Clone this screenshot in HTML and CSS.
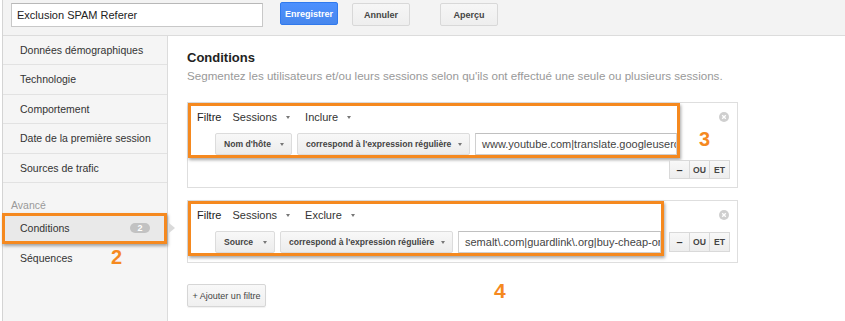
FILE: index.html
```html
<!DOCTYPE html>
<html lang="fr">
<head>
    <meta charset="UTF-8">
    <meta name="viewport" content="width=device-width, initial-scale=1.0">
    <title>Exclusion SPAM Referer</title>
    <link rel="stylesheet" href="styles.css">
</head>
<body>
<div class="page">
    <header class="topbar">
        <input class="segment-name" type="text" value="Exclusion SPAM Referer">
        <button class="btn btn-primary">Enregistrer</button>
        <button class="btn btn-cancel">Annuler</button>
        <button class="btn btn-preview">Aperçu</button>
    </header>

    <div class="layout">
        <nav class="sidebar">
            <ul class="nav-list">
                <li>Données démographiques</li>
                <li>Technologie</li>
                <li>Comportement</li>
                <li>Date de la première session</li>
                <li>Sources de trafic</li>
            </ul>
            <div class="nav-label">Avancé</div>
            <ul class="nav-list nav-advanced">
                <li class="active">Conditions <span class="count">2</span></li>
                <li>Séquences</li>
            </ul>
            <span class="callout callout-side">2</span>
        </nav>

        <main class="content">
            <h1>Conditions</h1>
            <p class="hint">Segmentez les utilisateurs et/ou leurs sessions selon qu'ils ont effectué une seule ou plusieurs sessions.</p>

            <!-- filtre 1 -->
            <div class="filter">
                <div class="filter-body">
                    <div class="annot annot-include">
                        <div class="filter-head">
                            <span class="filter-title">Filtre</span>
                            <span class="dropdown">Sessions <i class="caret"></i></span>
                            <span class="dropdown">Inclure <i class="caret"></i></span>
                        </div>
                        <div class="filter-row">
                            <span class="select-btn w-host">Nom d'hôte <i class="caret"></i></span>
                            <span class="select-btn w-match">correspond à l'expression régulière <i class="caret"></i></span>
                            <span class="value">www.youtube.com|translate.googleusercontent.com</span>
                        </div>
                    </div>
                    <span class="callout callout-3">3</span>
                </div>
                <div class="filter-foot">
                    <div class="logic"><span class="minus">–</span><span>OU</span><span>ET</span></div>
                </div>
                <svg class="remove" width="10" height="10" viewBox="0 0 10 10">
                    <circle cx="5" cy="5" r="5" fill="#cfcfcf"/>
                    <path d="M3.2 3.2 L6.8 6.8 M6.8 3.2 L3.2 6.8" stroke="#fff" stroke-width="1.3"/>
                </svg>
            </div>

            <!-- filtre 2 -->
            <div class="filter filter-second">
                <div class="filter-body">
                    <div class="annot annot-exclude">
                        <div class="filter-head">
                            <span class="filter-title">Filtre</span>
                            <span class="dropdown">Sessions <i class="caret"></i></span>
                            <span class="dropdown">Exclure <i class="caret"></i></span>
                        </div>
                        <div class="filter-row">
                            <span class="select-btn w-source">Source <i class="caret"></i></span>
                            <span class="select-btn w-match">correspond à l'expression régulière <i class="caret"></i></span>
                            <span class="value">semalt\.com|guardlink\.org|buy-cheap-online\.info</span>
                        </div>
                    </div>
                    <div class="logic logic-inline"><span class="minus">–</span><span>OU</span><span>ET</span></div>
                </div>
                <svg class="remove" width="10" height="10" viewBox="0 0 10 10">
                    <circle cx="5" cy="5" r="5" fill="#cfcfcf"/>
                    <path d="M3.2 3.2 L6.8 6.8 M6.8 3.2 L3.2 6.8" stroke="#fff" stroke-width="1.3"/>
                </svg>
            </div>

            <div class="add-row">
                <button class="add-btn">+ Ajouter un filtre</button>
                <span class="callout callout-4">4</span>
            </div>
        </main>
    </div>
</div>
</body>
</html>
```

FILE: styles.css
```css
body {
    margin: 0;
    font-family: "Liberation Sans", Arial, sans-serif;
    color: #333;
    background-color: #fff;
}
.page {
    margin-left: 2px;
    border-left: 1px solid #d4d4d4;
    min-height: 321px;
    display: flex;
    flex-direction: column;
}

/* barre du haut */
.topbar {
    height: 36px;
    box-sizing: border-box;
    display: flex;
    align-items: flex-start;
    padding: 2px 0 0 8px;
    background-color: #f3f3f3;
    border-bottom: 1px solid #dcdcdc;
}
.segment-name {
    width: 252px;
    height: 24px;
    margin: 1px 0 0;
    box-sizing: border-box;
    border: 1px solid #c8c8c8;
    border-top-color: #b8b8b8;
    padding: 0 5px;
    font-family: "Liberation Sans", Arial, sans-serif;
    font-size: 11px;
    color: #222;
    background-color: #fff;
}
.btn {
    width: 58px;
    height: 23px;
    padding: 0;
    font-family: "Liberation Sans", Arial, sans-serif;
    font-size: 9px;
    font-weight: bold;
    color: #444;
    background: linear-gradient(#f6f6f6, #eeeeee);
    border: 1px solid #d8d8d8;
    border-radius: 2px;
}
.btn-primary {
    margin-left: 17px;
    color: #fff;
    background: linear-gradient(#4d90fe, #4787ed);
    border-color: #3079ed;
}
.btn-cancel {
    margin: 1px 0 0 14px;
}
.btn-preview {
    margin: 1px 0 0 30px;
}

.layout {
    display: flex;
    flex: 1;
}

/* menu de gauche */
.sidebar {
    width: 164px;
    flex-shrink: 0;
    position: relative;
    background-color: #f5f5f5;
    border-right: 1px solid #dcdcdc;
}
.nav-list {
    list-style: none;
    margin: 0;
    padding: 0;
}
.nav-list li {
    height: 28.4px;
    line-height: 28.4px;
    padding-left: 17px;
    font-size: 10.5px;
    color: #333;
    border-bottom: 1px solid #e2e2e2;
}
.nav-label {
    margin-top: 16px;
    padding-left: 8px;
    font-size: 10.5px;
    line-height: 12px;
    color: #999;
}
.nav-advanced li {
    border-bottom: none;
    height: 28px;
    line-height: 28px;
}
.nav-advanced .active {
    position: relative;
    display: flex;
    align-items: center;
    justify-content: space-between;
    height: 25px;
    line-height: 25px;
    margin: 2px 0 0 -1px;
    padding: 0 14px 0 15px;
    background-color: #e9e9e9;
    border: 3px solid #f5891f;
    box-shadow: 1px 2px 3px rgba(0, 0, 0, 0.35);
}
.nav-advanced .active::after {
    content: "";
    position: absolute;
    right: -11px;
    top: 50%;
    margin-top: -5px;
    border-left: 6px solid #dadada;
    border-top: 5px solid transparent;
    border-bottom: 5px solid transparent;
}
.count {
    width: 20px;
    height: 10px;
    line-height: 10px;
    border-radius: 5px;
    text-align: center;
    font-size: 9px;
    font-weight: bold;
    color: #fff;
    background-color: #c2c2c2;
}

/* chiffres orange */
.callout {
    color: #f5891f;
    font-weight: bold;
    font-size: 20px;
    line-height: 23px;
}
.callout-side {
    position: absolute;
    left: 108px;
    top: 210px;
}
.callout-3 {
    margin: 25px 0 0 19px;
}
.callout-4 {
    font-size: 21px;
    line-height: 24px;
    margin: -5px 0 0 228px;
}

/* contenu */
.content {
    flex: 1;
    padding: 14px 0 0 19px;
}
h1 {
    margin: 0;
    font-size: 13px;
    line-height: 15px;
    color: #222;
}
.hint {
    margin: 4px 0 0;
    font-size: 11.6px;
    line-height: 13px;
    color: #999;
}
.filter {
    position: relative;
    width: 551px;
    box-sizing: border-box;
    margin-top: 20px;
    border: 1px solid #dedede;
}
.filter-second {
    margin-top: 12px;
    padding-bottom: 6px;
}
.filter-body {
    display: flex;
    align-items: flex-start;
}
.annot {
    box-sizing: border-box;
    padding: 1px 0 0 6px;
    border: 3px solid #f5891f;
    box-shadow: 1px 2px 3px rgba(0, 0, 0, 0.35);
}
.annot-include {
    width: 492px;
}
.annot-exclude {
    width: 476px;
}
.filter-head {
    display: flex;
    align-items: center;
    height: 20px;
    font-size: 11px;
    color: #333;
}
.filter-title {
    color: #222;
    margin-right: 11px;
}
.dropdown {
    display: flex;
    align-items: center;
    margin-right: 15px;
}
.caret {
    display: inline-block;
    flex-shrink: 0;
    width: 0;
    height: 0;
    border-left: 2.5px solid transparent;
    border-right: 2.5px solid transparent;
    border-top: 3px solid #777;
}
.dropdown .caret {
    margin-left: 9px;
}
.filter-row {
    display: flex;
    gap: 5px;
    height: 22px;
    margin: 6px 0 0 18px;
}
.select-btn {
    display: flex;
    align-items: center;
    box-sizing: border-box;
    height: 22px;
    padding: 0 7px 0 8px;
    font-size: 8.6px;
    font-weight: bold;
    color: #444;
    white-space: nowrap;
    background: linear-gradient(#f8f8f8, #ececec);
    border: 1px solid #dcdcdc;
    border-radius: 2px;
}
.select-btn .caret {
    margin-left: auto;
}
.w-host {
    width: 77px;
}
.w-source {
    width: 60px;
}
.w-match {
    width: 173px;
}
.value {
    flex: 1;
    min-width: 0;
    box-sizing: border-box;
    height: 22px;
    line-height: 20px;
    padding: 0 6px;
    font-size: 11px;
    color: #444;
    white-space: nowrap;
    overflow: hidden;
    border: 1px solid #d0d0d0;
    border-top-color: #c0c0c0;
}
.filter-foot {
    display: flex;
    justify-content: flex-end;
    margin: 2px 7px 0 0;
    padding-bottom: 8px;
}
.logic {
    display: flex;
}
.logic span {
    width: 21px;
    height: 19px;
    box-sizing: border-box;
    display: flex;
    align-items: center;
    justify-content: center;
    font-size: 8.6px;
    font-weight: bold;
    color: #444;
    background: linear-gradient(#f8f8f8, #ededed);
    border: 1px solid #d9d9d9;
}
.logic span + span {
    margin-left: -1px;
}
.logic .minus {
    font-size: 11px;
    color: #333;
}
.logic-inline {
    margin: 31px 0 0 5px;
}
.logic-inline span {
    height: 20px;
}
.remove {
    position: absolute;
    top: 9px;
    right: 8px;
}

.add-row {
    display: flex;
    align-items: flex-start;
    margin-top: 21px;
}
.add-btn {
    width: 79px;
    height: 23px;
    padding: 0;
    font-family: "Liberation Sans", Arial, sans-serif;
    font-size: 9px;
    color: #444;
    background: linear-gradient(#f8f8f8, #f0f0f0);
    border: 1px solid #d6d6d6;
    border-radius: 2px;
    box-shadow: 0 1px 1px rgba(0, 0, 0, 0.06);
}
```
